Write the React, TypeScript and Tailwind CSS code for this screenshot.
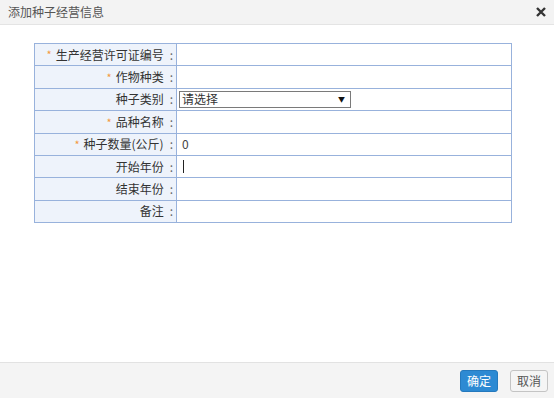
const rows: { label: string; req?: boolean; kind?: 'select' | 'zero' | 'cursor' }[] = [
  { label: '生产经营许可证编号', req: true },
  { label: '作物种类', req: true },
  { label: '种子类别', kind: 'select' },
  { label: '品种名称', req: true },
  { label: '种子数量(公斤)', req: true, kind: 'zero' },
  { label: '开始年份', kind: 'cursor' },
  { label: '结束年份' },
  { label: '备注' },
];

export default function App() {
  return (
    <div
      className="w-[554px] h-[398px] bg-white flex flex-col text-[12px] text-[#333]"
      style={{ fontFamily: '"Microsoft YaHei", "Noto Sans CJK SC", sans-serif' }}
    >
      <div className="h-[25px] bg-[#f3f3f3] border-b border-[#e4e4e4] flex items-center justify-between pl-[8px] pr-[6px]">
        <span className="text-[12px] text-[#555]">添加种子经营信息</span>
        <svg width="10" height="10" viewBox="0 0 10 10" className="mr-[2px]">
          <path d="M1 1L9 9M9 1L1 9" stroke="#333" strokeWidth="2.4" />
        </svg>
      </div>

      <div className="flex-1 pt-[18px] pl-[34px]">
        <div className="w-[478px] border-t border-l border-[#98b2dc]">
          {rows.map((r) => (
            <div key={r.label} className="flex h-[22.4px] border-b border-[#98b2dc]">
              <div className="w-[142px] shrink-0 bg-[#eef3fb] border-r border-[#98b2dc] flex items-center justify-end pr-[3px]">
                {r.req && <span className="text-[#f39a3c] text-[11px] mr-[4px]">*</span>}
                <span>{r.label}</span>
                <span className="ml-[6px] text-[#666]">:</span>
              </div>
              <div className="flex-1 border-r border-[#98b2dc] flex items-center pl-[2px]">
                {r.kind === 'select' && (
                  <div className="w-[172px] h-[17px] border border-[#7a7a7a] bg-white flex items-center justify-between pl-[2px] pr-[5px]">
                    <span>请选择</span>
                    <span className="text-[7px] text-[#111]">▼</span>
                  </div>
                )}
                {r.kind === 'zero' && <span className="pl-[3px] text-[#444]">0</span>}
                {r.kind === 'cursor' && <span className="ml-[4px] w-[1px] h-[13px] bg-[#222]" />}
              </div>
            </div>
          ))}
        </div>
      </div>

      <div className="h-[36px] bg-[#f4f4f4] border-t border-[#e2e2e2] flex items-center justify-end gap-[12px] pr-[6px]">
        <button className="w-[38px] h-[22px] rounded-[3px] bg-[#2d8ad3] border border-[#2579bd] text-white text-[12px]">
          确定
        </button>
        <button className="w-[38px] h-[22px] rounded-[3px] bg-[#f5f5f5] border border-[#c4c4c4] text-[#555] text-[12px]">
          取消
        </button>
      </div>
    </div>
  );
}
